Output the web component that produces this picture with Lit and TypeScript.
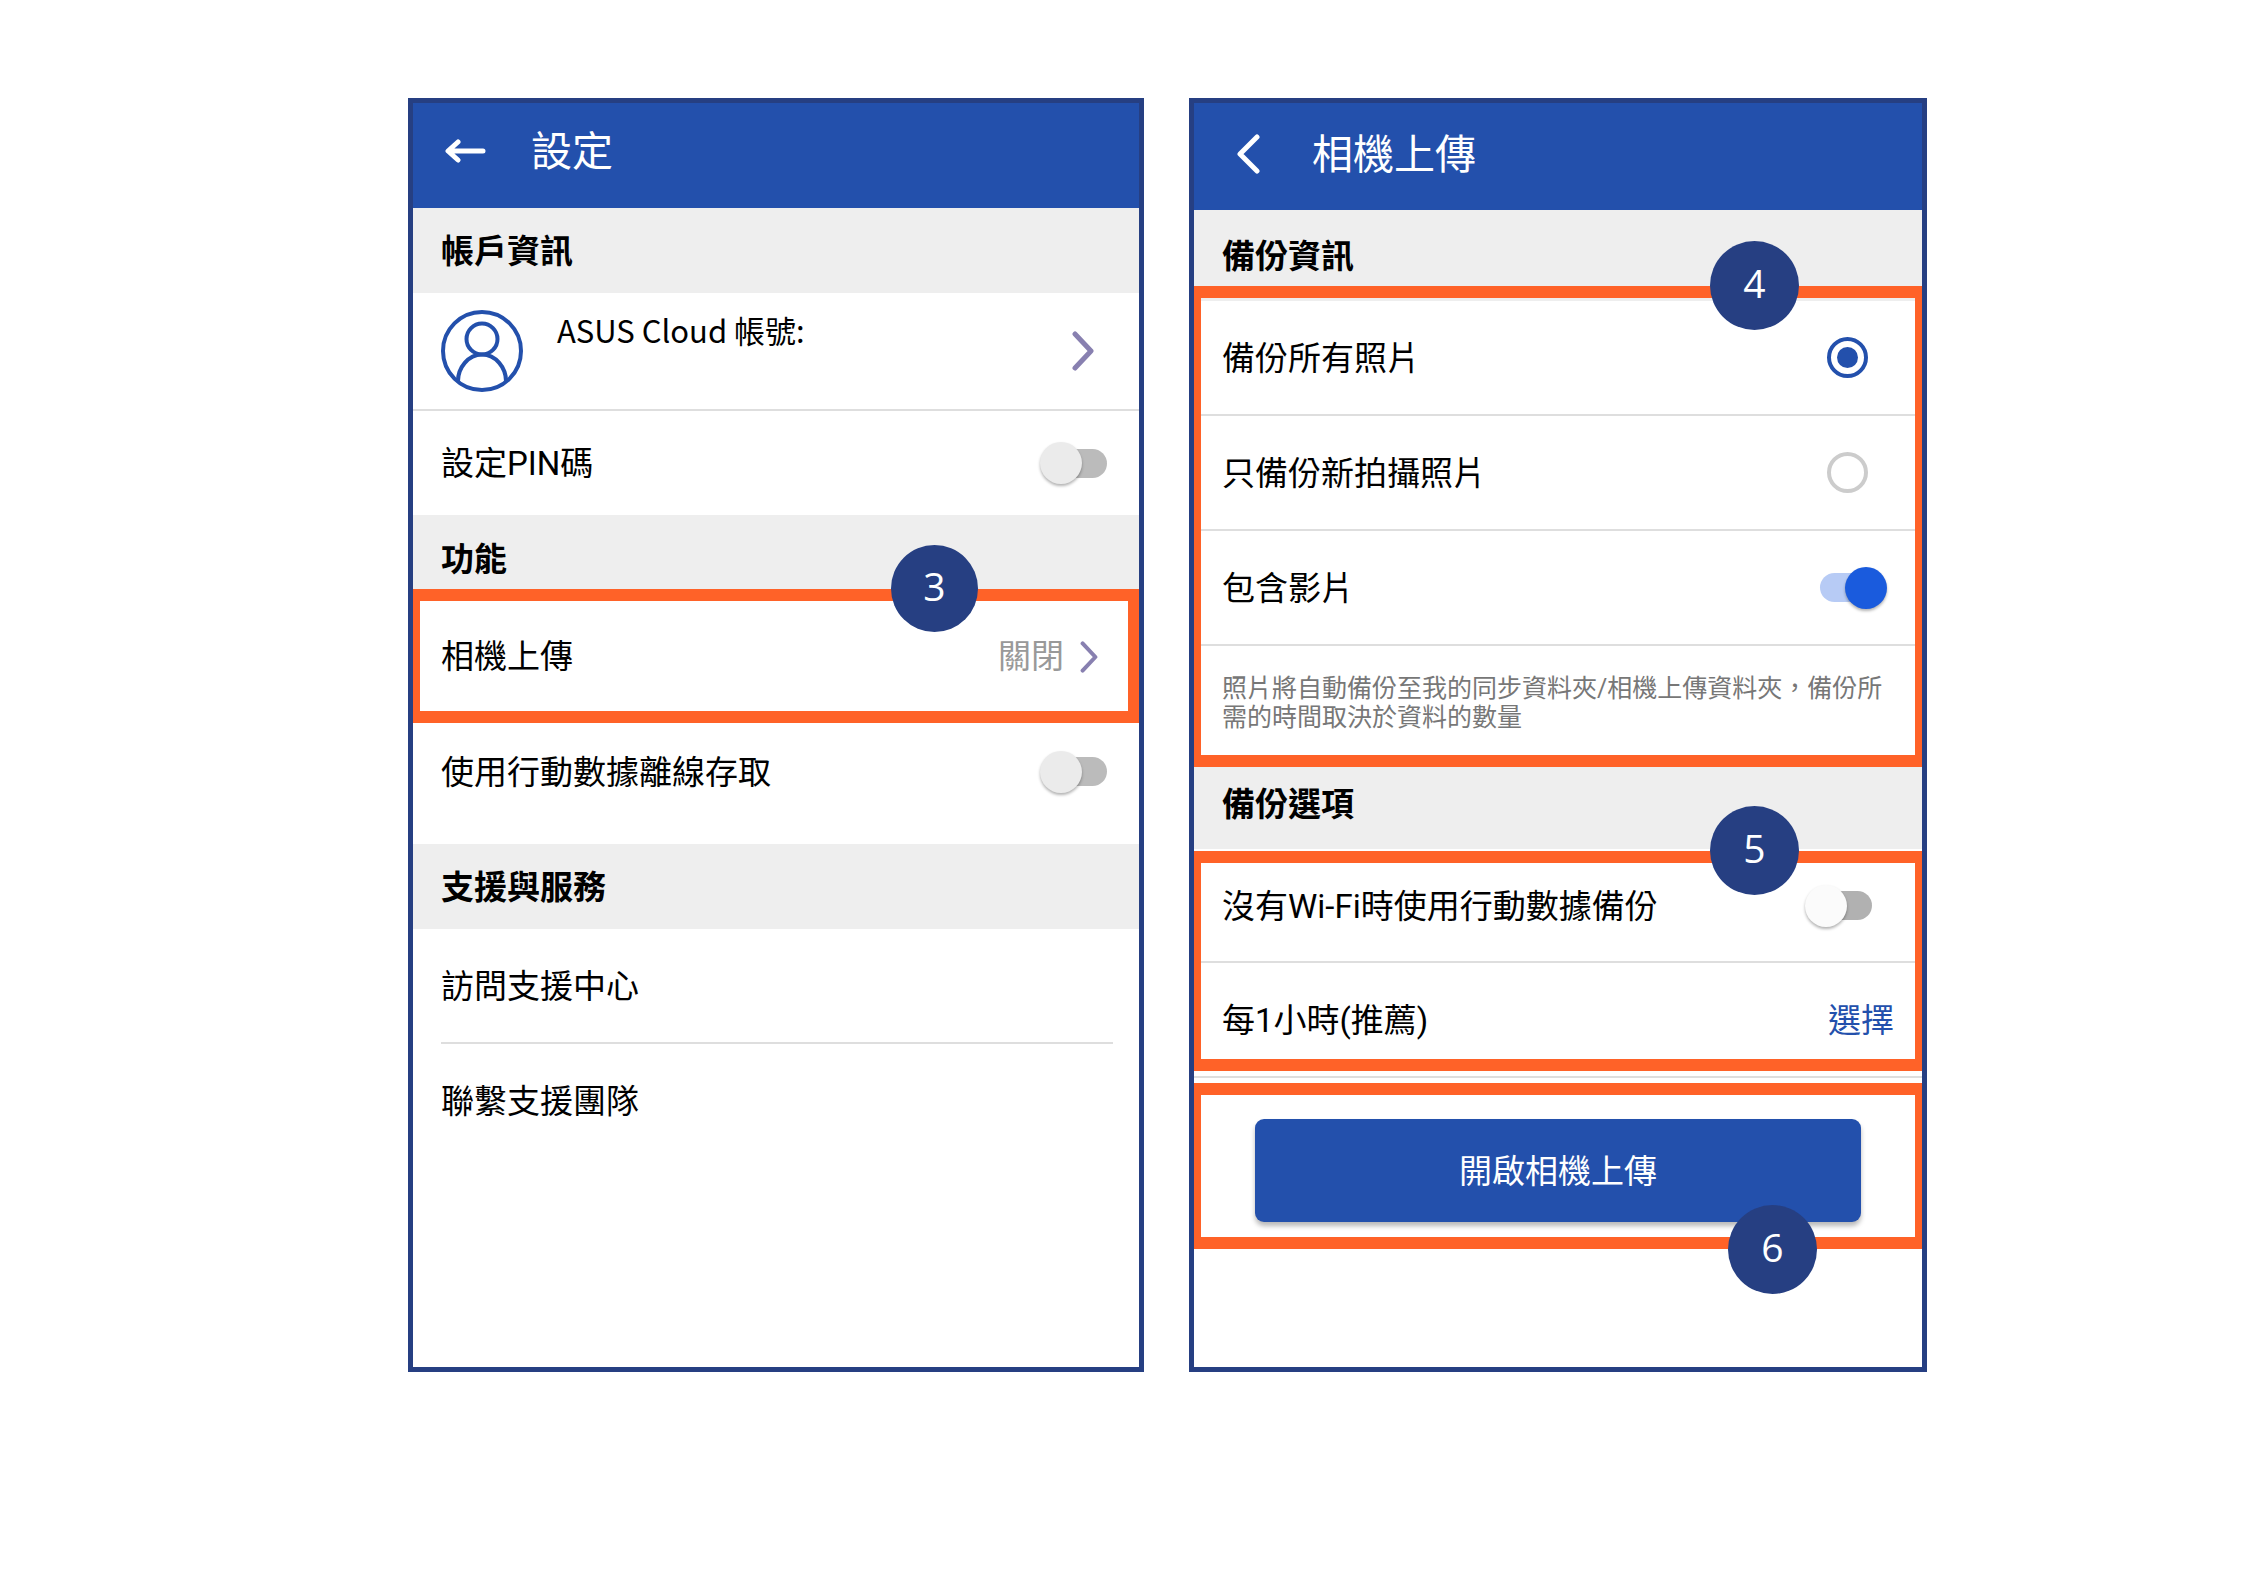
import { LitElement, html, css, svg } from "lit";
import { customElement, property, state } from "lit/decorators.js";
import { classMap } from "lit/directives/class-map.js";

const shared = css`
  * {
    box-sizing: border-box;
  }
  button,
  a {
    font: inherit;
    color: inherit;
    text-decoration: none;
    background: none;
    border: 0;
    margin: 0;
    padding: 0;
    text-align: left;
    cursor: pointer;
  }
  h1,
  h2,
  p {
    margin: 0;
  }
  .header {
    display: flex;
    align-items: center;
    background: #2350ac;
    color: #fff;
  }
  .back {
    display: flex;
  }
  .title {
    padding-top: 2px;
    font-size: 41px;
    line-height: 48px;
    font-weight: 400;
  }
  .section {
    display: flex;
    align-items: center;
    background: #eee;
    font-size: 33px;
    line-height: 40px;
    font-weight: 700;
  }
`;

const chevronPath = svg`<path d="M3 3 L19 20 L3 37" fill="none" stroke="currentColor" stroke-width="5" stroke-linecap="round" stroke-linejoin="round" />`;

/** Numbered round marker that sits over the edge of a highlighted group. */
@customElement("step-badge")
export class StepBadge extends LitElement {
  @property() label = "";

  static styles = css`
    :host {
      display: flex;
      align-items: center;
      justify-content: center;
      box-sizing: border-box;
      width: 89px;
      height: 89px;
      padding-bottom: 6px;
      border-radius: 50%;
      background: #263f82;
      color: #fff;
      font: 39px/48px "Open Sans", "Noto Sans", sans-serif;
    }
  `;

  render() {
    return html`<span>${this.label}</span>`;
  }
}

/** A label and its on/off switch, spread over the whole row. */
@customElement("ui-switch")
export class UiSwitch extends LitElement {
  @property() label = "";
  @property({ type: Boolean }) checked = false;
  @property({ type: Boolean }) light = false;

  static styles = css`
    :host {
      display: flex;
      flex: 1;
      align-items: center;
      justify-content: space-between;
    }
    .label {
      padding-top: 2px;
    }
    .switch {
      appearance: none;
      display: grid;
      align-items: center;
      flex: none;
      width: 67px;
      height: 42px;
      margin: 0;
      cursor: pointer;
    }
    .switch::before {
      content: "";
      grid-area: 1 / 1;
      justify-self: end;
      width: 56px;
      height: 29px;
      border-radius: 15px;
      background: #bbb;
    }
    .switch::after {
      content: "";
      grid-area: 1 / 1;
      justify-self: start;
      width: 42px;
      height: 42px;
      border-radius: 50%;
      background: #ebebeb;
      box-shadow: 0 2px 3px rgba(0, 0, 0, 0.3);
    }
    .switch.light::before {
      background: #b1b1b1;
    }
    .switch.light::after {
      background: #fbfbfb;
    }
    .switch:checked::before {
      justify-self: start;
      background: #b7cbf5;
    }
    .switch:checked::after {
      justify-self: end;
      background: #1a5bdd;
    }
  `;

  render() {
    return html`
      <label class="label" for="control">${this.label}</label>
      <input
        id="control"
        class=${classMap({ switch: true, light: this.light })}
        type="checkbox"
        role="switch"
        .checked=${this.checked}
        @change=${(e: Event) => (this.checked = (e.target as HTMLInputElement).checked)}
      />
    `;
  }
}

/** Left phone screen: the settings list. */
@customElement("settings-screen")
export class SettingsScreen extends LitElement {
  static styles = [
    shared,
    css`
      :host {
        display: flex;
        flex-direction: column;
        border: 5px solid #263f82;
        background: #fff;
        color: #000;
      }
      .header {
        height: 105px;
        padding: 0 32px 9px;
      }
      .back {
        width: 86px;
      }
      .section {
        height: 85px;
        padding: 3px 28px 0;
      }
      .section.short {
        height: 74px;
        padding-top: 16px;
      }
      .row {
        display: flex;
        align-items: center;
        justify-content: space-between;
        min-height: 113px;
        padding: 2px 32px 0 28px;
      }
      .row.account {
        min-height: 118px;
        padding: 0 45px 0 28px;
        border-bottom: 2px solid #dedede;
      }
      .row.pin {
        min-height: 104px;
        padding-top: 0;
      }
      .row.mobile {
        min-height: 121px;
        padding: 0 32px 24px 28px;
      }
      .avatar {
        flex: none;
      }
      .name {
        flex: 1;
        align-self: flex-start;
        padding: 17px 0 0 34px;
        font: 31px/40px "Noto Sans CJK TC", sans-serif;
      }
      .chevron {
        display: block;
        color: #8880b0;
      }
      .group {
        position: relative;
        border: 12px solid #ff6228;
        border-width: 12px 11px 12px 7px;
      }
      .group .row {
        width: 100%;
        min-height: 110px;
        padding: 2px 30px 0 21px;
      }
      .value {
        display: flex;
        align-items: center;
        gap: 16px;
        color: #999;
      }
      .badge {
        position: absolute;
        top: -56px;
        right: 150px;
        width: 87px;
        height: 87px;
      }
      .divider {
        height: 2px;
        margin: 0 26px 0 28px;
        background: #dedede;
      }
    `,
  ];

  render() {
    return html`
      <header class="header">
        <button class="back" aria-label="返回">
          <svg width="42" height="26" viewBox="0 0 42 26" fill="none" stroke="currentColor" stroke-width="5" stroke-linecap="round" stroke-linejoin="round">
            <path d="M38 13H4M13 4L3 13L13 22" />
          </svg>
        </button>
        <h1 class="title">設定</h1>
      </header>
      <h2 class="section">帳戶資訊</h2>
      <a class="row account" href="#account">
        <svg class="avatar" width="82" height="82" viewBox="0 0 82 82" fill="none" stroke="#2350ac" stroke-width="4">
          <circle cx="41" cy="41" r="39" />
          <circle cx="41" cy="29" r="15.500" />
          <path d="M17 71C17 58 27 44.500 41 44.500S65 58 65 71" />
        </svg>
        <span class="name">ASUS Cloud 帳號:</span>
        <svg class="chevron" width="22" height="40" viewBox="0 0 22 40">${chevronPath}</svg>
      </a>
      <div class="row pin"><ui-switch label="設定PIN碼"></ui-switch></div>
      <h2 class="section short">功能</h2>
      <div class="group">
        <button class="row">
          <span>相機上傳</span>
          <span class="value">
            關閉
            <svg class="chevron" width="18" height="32" viewBox="0 0 22 40">${chevronPath}</svg>
          </span>
        </button>
        <step-badge class="badge" label="3"></step-badge>
      </div>
      <div class="row mobile"><ui-switch label="使用行動數據離線存取"></ui-switch></div>
      <h2 class="section">支援與服務</h2>
      <a class="row" href="#support">訪問支援中心</a>
      <div class="divider"></div>
      <a class="row" href="#contact">聯繫支援團隊</a>
    `;
  }
}

/** Right phone screen: camera upload options. */
@customElement("upload-screen")
export class UploadScreen extends LitElement {
  @state() private scope = "all";

  static styles = [
    shared,
    css`
      :host {
        display: flex;
        flex-direction: column;
        border: 5px solid #263f82;
        background: #fff;
        color: #000;
      }
      .header {
        height: 107px;
        padding: 0 42px 6px;
      }
      .back {
        width: 76px;
      }
      .section {
        height: 76px;
        padding: 18px 28px 0;
      }
      .section.options {
        height: 84px;
        padding: 0 28px 6px;
        border-bottom: 2px solid #fff;
      }
      .group {
        position: relative;
        border: 12px solid #ff6228;
        border-width: 12px 7px;
      }
      .lead {
        height: 3px;
        background: #eee;
      }
      .row {
        display: flex;
        align-items: center;
        justify-content: space-between;
        height: 115px;
        padding: 0 47px 0 21px;
        border-bottom: 2px solid #dedede;
      }
      .label {
        padding-top: 2px;
      }
      .row.videos {
        padding-right: 28px;
      }
      .row.wifi {
        height: 100px;
        padding: 0 43px 13px 21px;
      }
      .row.interval {
        height: 96px;
        padding: 20px 21px 0;
        border-bottom: 0;
      }
      .radio {
        appearance: none;
        display: grid;
        place-items: center;
        width: 41px;
        height: 41px;
        margin: 0;
        border: 4px solid #ccc;
        border-radius: 50%;
        cursor: pointer;
      }
      .radio:checked {
        border-color: #2350ac;
      }
      .radio:checked::before {
        content: "";
        width: 21px;
        height: 21px;
        border-radius: 50%;
        background: #2350ac;
      }
      .note {
        padding: 28px 21px 23px;
        color: #777;
        font-size: 25px;
        line-height: 29px;
      }
      .choose {
        color: #2350ac;
      }
      .separator {
        height: 2px;
        margin: 5px 0;
        background: #dedede;
      }
      .action {
        padding: 24px 54px 15px;
      }
      .primary {
        display: block;
        width: 100%;
        height: 103px;
        padding-top: 2px;
        border-radius: 9px;
        background: #2350ac;
        color: #fff;
        text-align: center;
        box-shadow: 0 4px 5px rgba(0, 0, 0, 0.28);
      }
      .badge {
        position: absolute;
        top: -57px;
        right: 116px;
      }
      .badge.low {
        top: auto;
        bottom: -57px;
        right: 98px;
      }
    `,
  ];

  private option(id: string, text: string) {
    return html`
      <div class="row">
        <label class="label" for=${id}>${text}</label>
        <input
          id=${id}
          class="radio"
          type="radio"
          name="scope"
          .checked=${this.scope === id}
          @change=${() => (this.scope = id)}
        />
      </div>
    `;
  }

  render() {
    return html`
      <header class="header">
        <button class="back" aria-label="返回">
          <svg width="24" height="40" viewBox="0 0 24 40" fill="none" stroke="currentColor" stroke-width="5" stroke-linecap="round" stroke-linejoin="round">
            <path d="M21 3L4 20L21 37" />
          </svg>
        </button>
        <h1 class="title">相機上傳</h1>
      </header>
      <h2 class="section">備份資訊</h2>
      <div class="group">
        <div class="lead"></div>
        ${this.option("all", "備份所有照片")} ${this.option("new", "只備份新拍攝照片")}
        <div class="row videos"><ui-switch label="包含影片" checked></ui-switch></div>
        <p class="note">照片將自動備份至我的同步資料夾/相機上傳資料夾，備份所需的時間取決於資料的數量</p>
        <step-badge class="badge" label="4"></step-badge>
      </div>
      <h2 class="section options">備份選項</h2>
      <div class="group">
        <div class="row wifi"><ui-switch label="沒有Wi-Fi時使用行動數據備份" light></ui-switch></div>
        <div class="row interval">
          <span id="interval">每1小時(推薦)</span>
          <button class="choose" aria-describedby="interval">選擇</button>
        </div>
        <step-badge class="badge" label="5"></step-badge>
      </div>
      <div class="separator"></div>
      <div class="group">
        <div class="action"><button class="primary">開啟相機上傳</button></div>
        <step-badge class="badge low" label="6"></step-badge>
      </div>
    `;
  }
}

@customElement("app-root")
export class AppRoot extends LitElement {
  static styles = css`
    :host {
      display: grid;
      grid-template-columns: 736fr 738fr;
      gap: 45px;
      box-sizing: border-box;
      min-height: 100vh;
      padding: 98px 318px 215px 408px;
      background: #fff;
      font: 33px/40px Roboto, "Noto Sans CJK TC", sans-serif;
    }
  `;

  render() {
    return html`
      <settings-screen lang="zh-TW"></settings-screen>
      <upload-screen lang="zh-TW"></upload-screen>
    `;
  }
}
